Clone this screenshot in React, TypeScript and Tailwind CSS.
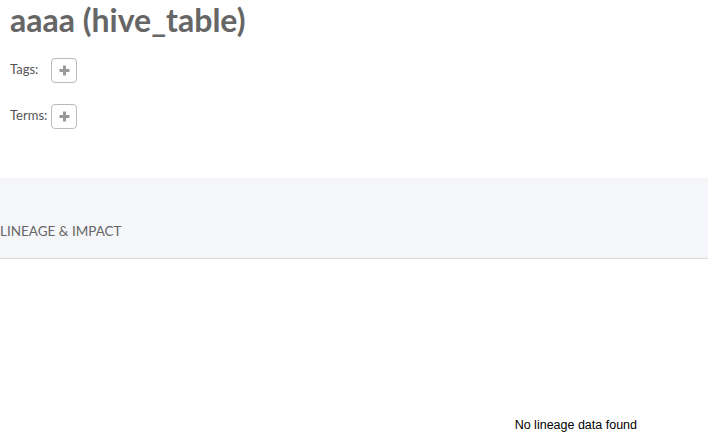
export default function App() {
  return (
    <div className="w-[708px] h-[446px] overflow-hidden bg-white font-['Lato',sans-serif] text-[#666]">
      <div className="px-[10px]">
        <h1 className="text-[32px] leading-[40px] font-bold text-[#666]">aaaa (hive_table)</h1>
        <div className="mt-[17px] flex items-center gap-[13px] h-[26px]">
          <span className="text-[13px] text-[#555]">Tags:</span>
          <PlusButton />
        </div>
        <div className="mt-[20px] flex items-center gap-[4px] h-[26px]">
          <span className="text-[13px] text-[#555]">Terms:</span>
          <PlusButton />
        </div>
      </div>
      <div className="mt-[49px] h-[81px] bg-[#f5f6fa] border-b border-[#dcdcdc] flex items-end pb-[17px]">
        <span className="text-[13.5px] leading-[20px] text-[#666] uppercase">Lineage &amp; Impact</span>
      </div>
      <div className="flex justify-end pr-[71px] pt-[157px]">
        <span className="font-['Liberation_Sans',sans-serif] text-[12.5px] text-black">No lineage data found</span>
      </div>
    </div>
  );
}

function PlusButton() {
  return (
    <button className="w-[26px] h-[25px] rounded-[4px] border border-[#bbb] bg-white flex items-center justify-center">
      <svg width="11" height="11" viewBox="0 0 11 11">
        <path d="M5.5 0.5v10M0.5 5.5h10" stroke="#999" strokeWidth="3" />
      </svg>
    </button>
  );
}
